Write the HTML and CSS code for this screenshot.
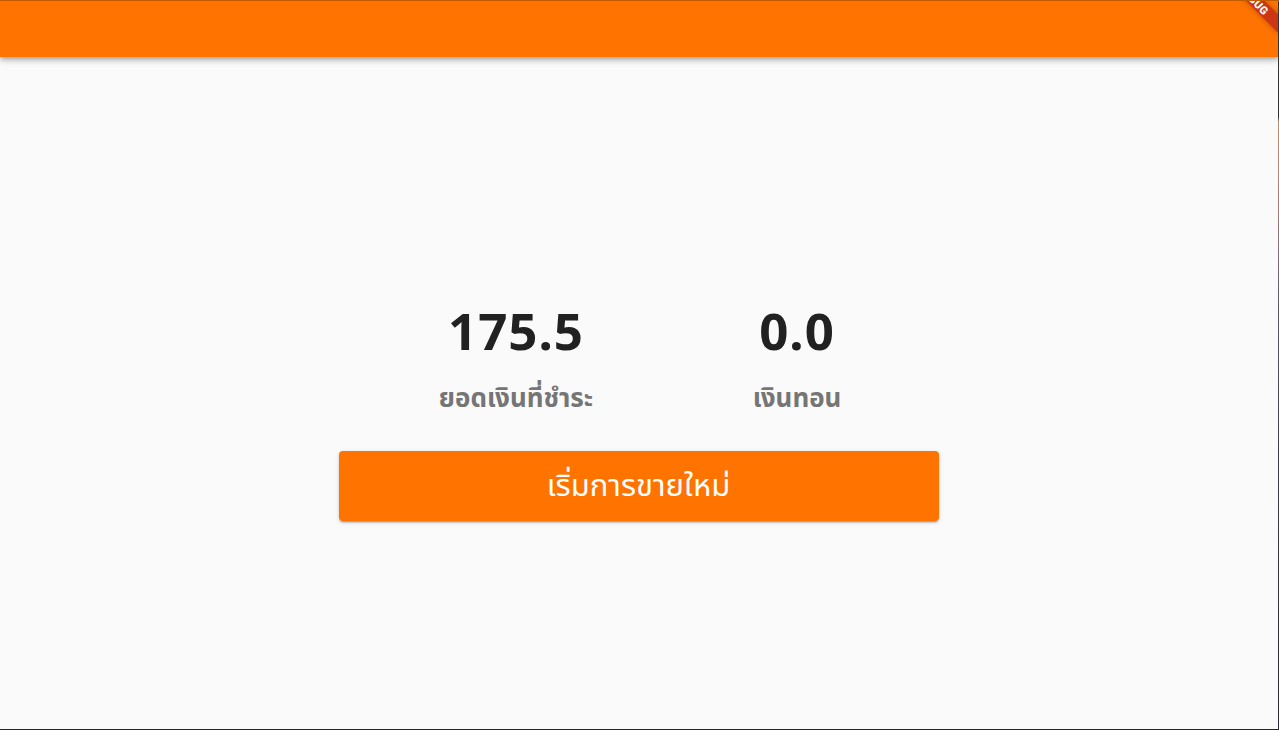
FILE: index.html
```html
<!DOCTYPE html>
<html lang="th">
<head>
<meta charset="utf-8">
<title>POS</title>
<link rel="stylesheet" href="styles.css">
</head>
<body>
<div class="frame">
  <header class="appbar"></header>
  <main class="content">
    <div class="stats">
      <div class="stat">
        <div class="num">175.5</div>
        <div class="label">ยอดเงินที่ชำระ</div>
      </div>
      <div class="stat">
        <div class="num">0.0</div>
        <div class="label">เงินทอน</div>
      </div>
    </div>
    <button class="btn">เริ่มการขายใหม่</button>
  </main>
  <div class="banner"><span class="banner-text">DEBUG</span></div>
  <div class="edge"></div>
</div>
</body>
</html>
```
FILE: styles.css
```css
* { box-sizing: border-box; }
html, body {
  margin: 0;
  padding: 0;
  width: 1279px;
  height: 730px;
  overflow: hidden;
  background: #fafafa;
  font-family: "Noto Sans", "Noto Sans Thai", "Roboto", sans-serif;
}
.frame {
  position: relative;
  width: 1279px;
  height: 730px;
  overflow: hidden;
  background: #fafafa;
  border-top: 1px solid #c25a00;
  border-bottom: 1px solid #262626;
  display: flex;
  flex-direction: column;
}
.appbar {
  height: 56px;
  flex: none;
  background: #ff7300;
  box-shadow: 0 2px 4px -1px rgba(0,0,0,0.2), 0 4px 5px 0 rgba(0,0,0,0.14), 0 1px 10px 0 rgba(0,0,0,0.12);
  position: relative;
  z-index: 1;
}
.content {
  flex: 1;
  display: flex;
  flex-direction: column;
  align-items: center;
  justify-content: flex-start;
  padding-top: 243px;
  padding-right: 2px;
}
.stats {
  width: 600px;
  padding-left: 37px;
  display: flex;
}
.stat {
  width: 281px;
  display: flex;
  flex-direction: column;
  align-items: center;
}
.num {
  font-size: 51px;
  font-weight: 700;
  color: #212121;
  line-height: 60px;
  letter-spacing: 1px;
}
.label {
  font-size: 26px;
  font-weight: 700;
  color: #757575;
  line-height: 36px;
  margin-top: 19px;
}
.btn {
  margin-top: 36px;
  width: 600px;
  height: 70px;
  border: none;
  border-radius: 4px;
  background: #ff7300;
  color: #ffffff;
  font-family: inherit;
  font-size: 31px;
  font-weight: 400;
  box-shadow: 0 3px 1px -2px rgba(0,0,0,0.2), 0 2px 2px 0 rgba(0,0,0,0.14), 0 1px 5px 0 rgba(0,0,0,0.12);
  padding: 0;
}
.banner {
  position: absolute;
  left: 1214px;
  top: -8px;
  width: 80px;
  height: 13px;
  transform: rotate(45deg);
  background: rgba(183, 28, 28, 0.7);
  box-shadow: 0 0 6px rgba(0,0,0,0.25);
  z-index: 2;
  display: flex;
  justify-content: center;
}
.banner-text {
  color: #fff;
  font-family: "Roboto", "Noto Sans", sans-serif;
  font-size: 11px;
  font-weight: 900;
  line-height: 13px;
  letter-spacing: 0.3px;
  position: relative;
  top: 1px;
}
.edge {
  position: absolute;
  right: 0;
  top: -1px;
  width: 1px;
  height: 730px;
  background: linear-gradient(to bottom, #c25a00 0, #c25a00 1px, #333 2px, #333 117px, #c98a5a 122px, #b8786a 200px, #8a6a80 250px, #5a5a72 300px, #3c3c50 450px, #2a2a35 730px);
  z-index: 3;
}
```
